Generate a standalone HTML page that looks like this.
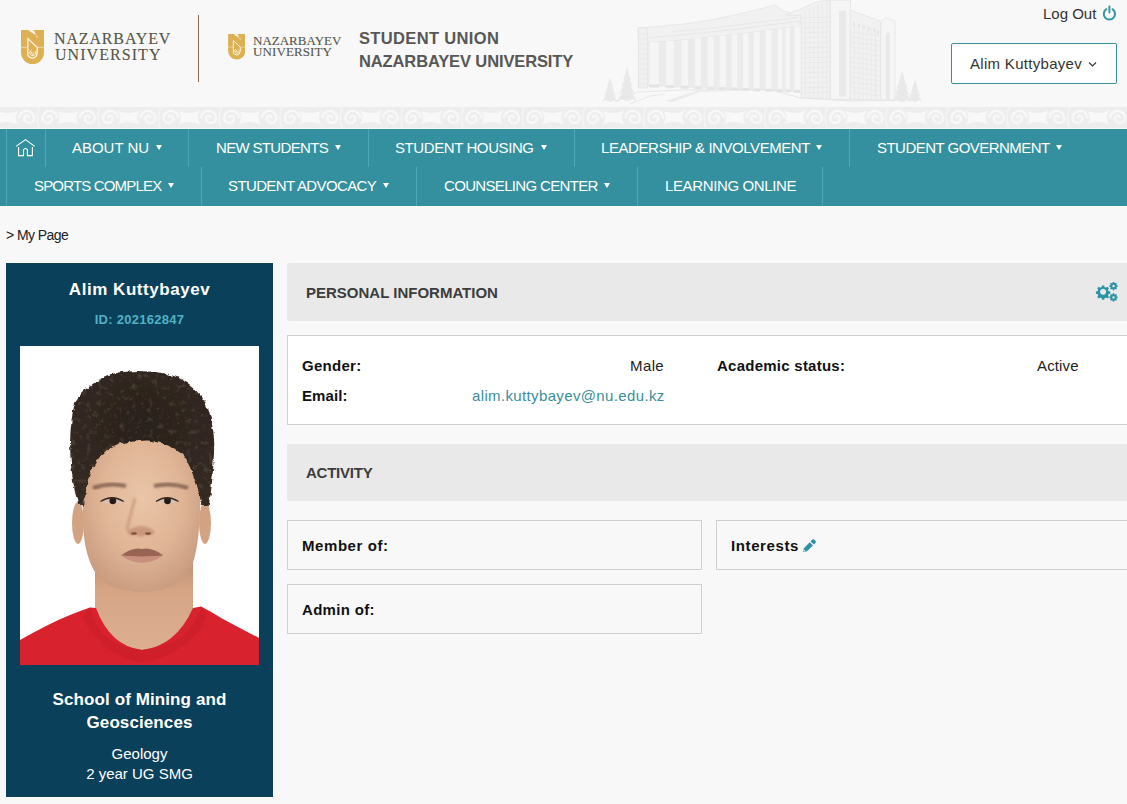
<!DOCTYPE html>
<html><head><meta charset="utf-8">
<style>
*{margin:0;padding:0;box-sizing:border-box}
html,body{width:1127px;height:804px;overflow:hidden;background:#f8f8f8;font-family:"Liberation Sans",sans-serif;position:relative}
.abs{position:absolute}
#nav{position:absolute;left:0;top:129px;width:1127px;height:77px;background:#34909e}
.sep{position:absolute;width:1px;background:#4aa9b6}
.ni{position:absolute;color:#fff;font-size:15px;line-height:17px;white-space:nowrap}
.arr{position:absolute;width:0;height:0;border-left:3px solid transparent;border-right:3px solid transparent;border-top:5px solid #fff}
#card{position:absolute;left:6px;top:263px;width:267px;height:534px;background:#0b405b;outline:1px solid #fff}
.hdr{position:absolute;border-radius:2px;background:#e9e9e9;font-weight:bold;color:#3c3c3c;font-size:15px}
.box{position:absolute;border:1px solid #cfcfcf}
.lbl{position:absolute;font-weight:bold;font-size:15px;line-height:17px;color:#111;white-space:nowrap}
.val{position:absolute;font-size:15px;line-height:17px;color:#222;white-space:nowrap}
.ser{position:absolute;font-family:"Liberation Serif",serif;color:#55554b;white-space:nowrap;-webkit-text-stroke:0.12px #55554b}
</style></head>
<body>
<!-- ornament strip -->
<svg class="abs" style="left:0;top:107px" width="1127" height="22">
  <defs>
    <pattern id="orn" x="-0.6" y="0" width="60.6" height="21" patternUnits="userSpaceOnUse">
      <rect width="60.6" height="21" fill="#ededed"/>
      <path d="M-3 3.5 Q8 8.5 19 3.5 Q14 10.5 19 17.5 Q8 12.5 -3 17.5 Q2 10.5 -3 3.5Z" fill="#f8f8f8"/>
      <path d="M57.6 3.5 Q68.6 8.5 79.6 3.5 Q74.6 10.5 79.6 17.5 Q68.6 12.5 57.6 17.5 Q62.6 10.5 57.6 3.5Z" fill="#f8f8f8"/>
      <path d="M29.70 11.20 A2.4 2.4 0 0 0 24.90 11.20 A4.9 4.9 0 0 0 34.70 11.20 A7.4 7.4 0 0 0 19.90 11.20 " fill="none" stroke="#f8f8f8" stroke-width="2.6"/>
      <path d="M48.00 11.20 A2.4 2.4 0 0 1 52.80 11.20 A4.9 4.9 0 0 1 43.00 11.20 A7.4 7.4 0 0 1 57.80 11.20 " fill="none" stroke="#f8f8f8" stroke-width="2.6"/>
      <path d="M39.9 0.5 Q36.5 10.5 39.5 20.5" fill="none" stroke="#f8f8f8" stroke-width="1.2"/>
    </pattern>
  </defs>
  <rect width="1127" height="21" fill="url(#orn)"/>
</svg>

<!-- building -->
<svg class="abs" style="left:590px;top:0" width="345" height="106" viewBox="0 0 345 106">
<polygon points="48,43.0 54,42.8 60,42.4 66,42.0 72,41.6 78,41.1 84,40.6 90,40.1 96,39.5 102,38.9 108,38.3 114,37.7 120,37.1 126,36.4 132,35.8 138,35.1 144,34.4 150,33.7 156,33.0 162,32.2 168,31.5 174,30.7 180,30.0 186,29.2 192,28.4 198,27.6 204,26.8 210,26.0 210,92.0 204,91.8 198,91.6 192,91.3 186,91.1 180,90.9 174,90.7 168,90.4 162,90.2 156,90.0 150,89.8 144,89.6 138,89.3 132,89.1 126,88.9 120,88.7 114,88.4 108,88.2 102,88.0 96,87.8 90,87.6 84,87.3 78,87.1 72,86.9 66,86.7 60,86.4 54,86.2 48,86.0" fill="#ebebeb"/>
<polygon points="48,28.0 81,25.0 87,24.6 93,24.0 99,23.3 105,22.4 111,21.5 117,20.5 123,19.4 129,18.2 135,17.0 141,15.7 147,14.4 153,13.0 159,11.6 165,10.2 171,8.7 177,7.1 183,5.5 185,5.3 194,11.3 211,15.6 210,26.0 204,26.8 198,27.6 192,28.4 186,29.2 180,30.0 174,30.7 168,31.5 162,32.2 156,33.0 150,33.7 144,34.4 138,35.1 132,35.8 126,36.4 120,37.1 114,37.7 108,38.3 102,38.9 96,39.5 90,40.1 84,40.6 78,41.1 72,41.6 66,42.0 60,42.4 54,42.8 48,43.0" fill="#f1f1f1" stroke="#e4e4e4" stroke-width="0.8"/>
<polyline points="48,38.0 54,37.8 60,37.4 66,37.0 72,36.6 78,36.1 84,35.6 90,35.1 96,34.5 102,33.9 108,33.3 114,32.7 120,32.1 126,31.4 132,30.8 138,30.1 144,29.4 150,28.7 156,28.0 162,27.2 168,26.5 174,25.7 180,25.0 186,24.2 192,23.4 198,22.6 204,21.8 210,21.0" fill="none" stroke="#e4e4e4" stroke-width="0.9"/>
<polyline points="82,31.8 88,31.2 94,30.7 100,30.1 106,29.5 112,28.9 118,28.3 124,27.6 130,27.0 136,26.3 142,25.6 148,24.9 154,24.2 160,23.5 166,22.7 172,22.0 178,21.2 184,20.5 190,19.7 196,18.9 202,18.1 208,17.3" fill="none" stroke="#e4e4e4" stroke-width="0.7"/>
<rect x="59.6" y="42.2" width="9.1" height="42.4" fill="#f5f5f5"/>
<rect x="59.1" y="84.6" width="10.1" height="3" fill="#e4e4e4"/>
<rect x="76.2" y="40.9" width="7.5" height="44.2" fill="#f5f5f5"/>
<rect x="75.7" y="85.2" width="8.5" height="3" fill="#e4e4e4"/>
<rect x="91.3" y="39.6" width="6.7" height="46.1" fill="#f5f5f5"/>
<rect x="90.8" y="85.7" width="7.7" height="3" fill="#e4e4e4"/>
<rect x="104.9" y="38.3" width="6.0" height="47.9" fill="#f5f5f5"/>
<rect x="104.4" y="86.2" width="7.0" height="3" fill="#e4e4e4"/>
<rect x="117.7" y="37.0" width="6.0" height="49.7" fill="#f5f5f5"/>
<rect x="117.2" y="86.7" width="7.0" height="3" fill="#e4e4e4"/>
<rect x="129.7" y="35.7" width="6.1" height="51.5" fill="#f5f5f5"/>
<rect x="129.2" y="87.1" width="7.1" height="3" fill="#e4e4e4"/>
<rect x="141.8" y="34.3" width="5.3" height="53.2" fill="#f5f5f5"/>
<rect x="141.3" y="87.6" width="6.3" height="3" fill="#e4e4e4"/>
<rect x="153.1" y="33.0" width="5.3" height="55.0" fill="#f5f5f5"/>
<rect x="152.6" y="88.0" width="6.3" height="3" fill="#e4e4e4"/>
<rect x="163.7" y="31.7" width="6.0" height="56.7" fill="#f5f5f5"/>
<rect x="163.2" y="88.4" width="7.0" height="3" fill="#e4e4e4"/>
<rect x="175.7" y="30.1" width="6.1" height="58.7" fill="#f5f5f5"/>
<rect x="175.2" y="88.8" width="7.1" height="3" fill="#e4e4e4"/>
<rect x="187.8" y="28.7" width="4.5" height="60.6" fill="#f5f5f5"/>
<rect x="187.3" y="89.3" width="5.5" height="3" fill="#e4e4e4"/>
<rect x="195.4" y="27.7" width="4.5" height="61.9" fill="#f5f5f5"/>
<rect x="194.9" y="89.5" width="5.5" height="3" fill="#e4e4e4"/>
<rect x="204.4" y="26.4" width="5.6" height="63.5" fill="#f5f5f5"/>
<rect x="203.9" y="89.9" width="6.6" height="3" fill="#e4e4e4"/>
<rect x="48.3" y="28" width="9" height="60" fill="#f0f0f0" stroke="#e4e4e4" stroke-width="0.8"/>
<line x1="48.3" y1="34" x2="57.3" y2="34" stroke="#e4e4e4" stroke-width="0.6"/>
<line x1="48.3" y1="39" x2="57.3" y2="39" stroke="#e4e4e4" stroke-width="0.6"/>
<line x1="48.3" y1="44" x2="57.3" y2="44" stroke="#e4e4e4" stroke-width="0.6"/>
<line x1="48.3" y1="49" x2="57.3" y2="49" stroke="#e4e4e4" stroke-width="0.6"/>
<line x1="48.3" y1="54" x2="57.3" y2="54" stroke="#e4e4e4" stroke-width="0.6"/>
<line x1="48.3" y1="59" x2="57.3" y2="59" stroke="#e4e4e4" stroke-width="0.6"/>
<line x1="48.3" y1="64" x2="57.3" y2="64" stroke="#e4e4e4" stroke-width="0.6"/>
<line x1="48.3" y1="69" x2="57.3" y2="69" stroke="#e4e4e4" stroke-width="0.6"/>
<line x1="48.3" y1="74" x2="57.3" y2="74" stroke="#e4e4e4" stroke-width="0.6"/>
<line x1="48.3" y1="79" x2="57.3" y2="79" stroke="#e4e4e4" stroke-width="0.6"/>
<line x1="48.3" y1="84" x2="57.3" y2="84" stroke="#e4e4e4" stroke-width="0.6"/>
<polygon points="195.6,15 228.3,1.4 240,0 240,99 211,98 211,15.6" fill="#f1f1f1" stroke="#e4e4e4" stroke-width="0.8"/>
<line x1="215.3" y1="11.9" x2="215.3" y2="98" stroke="#e4e4e4" stroke-width="0.6"/>
<line x1="219.6" y1="9.7" x2="219.6" y2="98" stroke="#e4e4e4" stroke-width="0.6"/>
<line x1="223.9" y1="7.6" x2="223.9" y2="98" stroke="#e4e4e4" stroke-width="0.6"/>
<line x1="228.2" y1="5.4" x2="228.2" y2="98" stroke="#e4e4e4" stroke-width="0.6"/>
<line x1="232.5" y1="3.2" x2="232.5" y2="98" stroke="#e4e4e4" stroke-width="0.6"/>
<line x1="236.8" y1="1.1" x2="236.8" y2="98" stroke="#e4e4e4" stroke-width="0.6"/>
<line x1="211" y1="18" x2="240" y2="17" stroke="#e4e4e4" stroke-width="0.6"/>
<line x1="211" y1="23" x2="240" y2="22" stroke="#e4e4e4" stroke-width="0.6"/>
<line x1="211" y1="28" x2="240" y2="27" stroke="#e4e4e4" stroke-width="0.6"/>
<line x1="211" y1="33" x2="240" y2="32" stroke="#e4e4e4" stroke-width="0.6"/>
<line x1="211" y1="38" x2="240" y2="37" stroke="#e4e4e4" stroke-width="0.6"/>
<line x1="211" y1="43" x2="240" y2="42" stroke="#e4e4e4" stroke-width="0.6"/>
<line x1="211" y1="48" x2="240" y2="47" stroke="#e4e4e4" stroke-width="0.6"/>
<line x1="211" y1="53" x2="240" y2="52" stroke="#e4e4e4" stroke-width="0.6"/>
<line x1="211" y1="58" x2="240" y2="57" stroke="#e4e4e4" stroke-width="0.6"/>
<line x1="211" y1="63" x2="240" y2="62" stroke="#e4e4e4" stroke-width="0.6"/>
<line x1="211" y1="68" x2="240" y2="67" stroke="#e4e4e4" stroke-width="0.6"/>
<line x1="211" y1="73" x2="240" y2="72" stroke="#e4e4e4" stroke-width="0.6"/>
<line x1="211" y1="78" x2="240" y2="77" stroke="#e4e4e4" stroke-width="0.6"/>
<line x1="211" y1="83" x2="240" y2="82" stroke="#e4e4e4" stroke-width="0.6"/>
<line x1="211" y1="88" x2="240" y2="87" stroke="#e4e4e4" stroke-width="0.6"/>
<line x1="211" y1="93" x2="240" y2="92" stroke="#e4e4e4" stroke-width="0.6"/>
<rect x="240.4" y="0" width="20" height="99.4" fill="#f5f5f5" stroke="#e4e4e4" stroke-width="0.9"/>
<rect x="249" y="10.6" width="7" height="86" fill="#e9e9e9"/>
<polygon points="260.3,10 290.8,21.3 290.8,100 260.3,99.4" fill="#f1f1f1" stroke="#e4e4e4" stroke-width="0.8"/>
<line x1="264.5" y1="21.6" x2="264.5" y2="99" stroke="#e4e4e4" stroke-width="0.6"/>
<line x1="268.7" y1="23.1" x2="268.7" y2="99" stroke="#e4e4e4" stroke-width="0.6"/>
<line x1="272.9" y1="24.7" x2="272.9" y2="99" stroke="#e4e4e4" stroke-width="0.6"/>
<line x1="277.1" y1="26.2" x2="277.1" y2="99" stroke="#e4e4e4" stroke-width="0.6"/>
<line x1="281.3" y1="27.8" x2="281.3" y2="99" stroke="#e4e4e4" stroke-width="0.6"/>
<line x1="285.5" y1="29.3" x2="285.5" y2="99" stroke="#e4e4e4" stroke-width="0.6"/>
<line x1="260.3" y1="32" x2="290.8" y2="36" stroke="#e4e4e4" stroke-width="0.6"/>
<line x1="260.3" y1="37" x2="290.8" y2="41" stroke="#e4e4e4" stroke-width="0.6"/>
<line x1="260.3" y1="42" x2="290.8" y2="46" stroke="#e4e4e4" stroke-width="0.6"/>
<line x1="260.3" y1="47" x2="290.8" y2="51" stroke="#e4e4e4" stroke-width="0.6"/>
<line x1="260.3" y1="52" x2="290.8" y2="56" stroke="#e4e4e4" stroke-width="0.6"/>
<line x1="260.3" y1="57" x2="290.8" y2="61" stroke="#e4e4e4" stroke-width="0.6"/>
<line x1="260.3" y1="62" x2="290.8" y2="66" stroke="#e4e4e4" stroke-width="0.6"/>
<line x1="260.3" y1="67" x2="290.8" y2="71" stroke="#e4e4e4" stroke-width="0.6"/>
<line x1="260.3" y1="72" x2="290.8" y2="76" stroke="#e4e4e4" stroke-width="0.6"/>
<line x1="260.3" y1="77" x2="290.8" y2="81" stroke="#e4e4e4" stroke-width="0.6"/>
<line x1="260.3" y1="82" x2="290.8" y2="86" stroke="#e4e4e4" stroke-width="0.6"/>
<line x1="260.3" y1="87" x2="290.8" y2="91" stroke="#e4e4e4" stroke-width="0.6"/>
<line x1="260.3" y1="92" x2="290.8" y2="96" stroke="#e4e4e4" stroke-width="0.6"/>
<rect x="263" y="22.0" width="2" height="4" fill="#e6e6e6"/>
<rect x="268" y="23.6" width="2" height="4" fill="#e6e6e6"/>
<rect x="273" y="25.2" width="2" height="4" fill="#e6e6e6"/>
<rect x="278" y="26.8" width="2" height="4" fill="#e6e6e6"/>
<rect x="283" y="28.4" width="2" height="4" fill="#e6e6e6"/>
<rect x="287" y="30.0" width="2" height="4" fill="#e6e6e6"/>
<polygon points="290.8,21.3 296,17.8 305,21 305,100 290.8,100" fill="#f5f5f5" stroke="#e4e4e4" stroke-width="0.8"/>
<rect x="295.8" y="32.7" width="4" height="66.7" fill="#e9e9e9"/>
<path d="M37 66.8 L39.0 73.6 L38.1 71.6 L41.0 80.5 L39.2 78.5 L43.0 87.3 L40.3 85.3 L45.0 94.2 L41.4 92.2 L47.0 101.0 L42.5 99.0 L37 101 L31.5 99.0 L27.0 101.0 L32.6 92.2 L29.0 94.2 L33.7 85.3 L31.0 87.3 L34.8 78.5 L33.0 80.5 L35.9 71.6 L35.0 73.6 Z" fill="#e9e9e9"/>
<path d="M20 77.6 L21.6 82.5 L20.9 80.5 L23.2 87.4 L21.8 85.4 L24.8 92.2 L22.6 90.2 L26.4 97.1 L23.5 95.1 L28.0 102.0 L24.4 100.0 L20 102 L15.6 100.0 L12.0 102.0 L16.5 95.1 L13.6 97.1 L17.4 90.2 L15.2 92.2 L18.2 85.4 L16.8 87.4 L19.1 80.5 L18.4 82.5 Z" fill="#e9e9e9"/>
<path d="M312 71 L314.0 77.2 L313.1 75.2 L316.0 83.4 L314.2 81.4 L318.0 89.6 L315.3 87.6 L320.0 95.8 L316.4 93.8 L322.0 102.0 L317.5 100.0 L312 102 L306.5 100.0 L302.0 102.0 L307.6 93.8 L304.0 95.8 L308.7 87.6 L306.0 89.6 L309.8 81.4 L308.0 83.4 L310.9 75.2 L310.0 77.2 Z" fill="#e9e9e9"/>
<path d="M325 79.5 L326.5 84.0 L325.8 82.0 L328.0 88.5 L326.6 86.5 L329.5 93.0 L327.5 91.0 L331.0 97.5 L328.3 95.5 L332.5 102.0 L329.1 100.0 L325 102 L320.9 100.0 L317.5 102.0 L321.7 95.5 L319.0 97.5 L322.5 91.0 L320.5 93.0 L323.4 86.5 L322.0 88.5 L324.2 82.0 L323.5 84.0 Z" fill="#e9e9e9"/>
<polygon points="75,101 108,90.5 170,90 110,92 82,102" fill="#ebebeb"/>
<polyline points="25,102 48,92 90,90 180,89.5 211,98 260,100.9 305,100.5" fill="none" stroke="#e4e4e4" stroke-width="0.9"/>
<polyline points="40,104 60,96 75,94" fill="none" stroke="#e4e4e4" stroke-width="0.8"/>
</svg>

<!-- logo 1 -->
<svg class="abs" style="left:21px;top:30px" width="23" height="34" viewBox="0 0 23 34">
  <path d="M0 0 H23 V22.5 A11.5 11.5 0 0 1 0 22.5 Z" fill="#ddb053"/>
  <path d="M0 17.3 H6.4 M16.7 17.3 H23" stroke="#f3e2bb" stroke-width="0.8"/>
  <path d="M7.2 0.2 L12.8 0.2 L16.4 8.6 L16.4 6 Z" fill="#fffdf6"/>
  <path d="M6.9 8.6 L16.2 17.4 V22.8 Q15.8 28 11.3 28 Q6.9 27.8 6.9 24 Z" fill="none" stroke="#fffaf0" stroke-width="1.2"/>
  <path d="M13.92 20.94 A2.9 2.9 0 1 1 10.71 20.07 M12.90 22.80 A1.2 1.2 0 1 1 11.50 21.70" fill="none" stroke="#fffaf0" stroke-width="0.9"/>
</svg>
<div class="ser" style="left:54px;top:30px;font-size:16px;line-height:18px;letter-spacing:0.85px">NAZARBAYEV</div>
<div class="ser" style="left:55px;top:46px;font-size:16px;line-height:18px;letter-spacing:1.05px">UNIVERSITY</div>
<div class="abs" style="left:198px;top:15px;width:1px;height:67px;background:#8d6c52"></div>

<!-- logo 2 -->
<svg class="abs" style="left:227.5px;top:34px" width="17.5" height="25.5" viewBox="0 0 23 34">
  <path d="M0 0 H23 V22.5 A11.5 11.5 0 0 1 0 22.5 Z" fill="#ddb053"/>
  <path d="M0 17.3 H6.4 M16.7 17.3 H23" stroke="#f3e2bb" stroke-width="0.8"/>
  <path d="M7.2 0.2 L12.8 0.2 L16.4 8.6 L16.4 6 Z" fill="#fffdf6"/>
  <path d="M6.9 8.6 L16.2 17.4 V22.8 Q15.8 28 11.3 28 Q6.9 27.8 6.9 24 Z" fill="none" stroke="#fffaf0" stroke-width="1.2"/>
  <path d="M13.92 20.94 A2.9 2.9 0 1 1 10.71 20.07 M12.90 22.80 A1.2 1.2 0 1 1 11.50 21.70" fill="none" stroke="#fffaf0" stroke-width="0.9"/>
</svg>
<div class="ser" style="left:253px;top:34px;font-size:13px;line-height:14px;letter-spacing:0px">NAZARBAYEV</div>
<div class="ser" style="left:253px;top:45px;font-size:13px;line-height:14px;letter-spacing:0.1px">UNIVERSITY</div>

<div class="abs" style="left:359px;top:29px;font-size:16.5px;line-height:19px;font-weight:bold;color:#575757;white-space:nowrap;letter-spacing:0.35px">STUDENT UNION</div>
<div class="abs" style="left:359px;top:52px;font-size:16.5px;line-height:19px;font-weight:bold;color:#575757;white-space:nowrap;letter-spacing:-0.12px">NAZARBAYEV UNIVERSITY</div>

<!-- logout -->
<div class="abs" style="left:1043px;top:5px;font-size:15px;line-height:17px;color:#333;white-space:nowrap">Log Out</div>
<svg class="abs" style="left:1102px;top:5px" width="15" height="16" viewBox="0 0 15 16">
  <path d="M4.3 4.2 A5.6 5.6 0 1 0 10.5 4.2" fill="none" stroke="#3a95a3" stroke-width="2" stroke-linecap="round"/>
  <path d="M7.4 1.4 V7.4" stroke="#3a95a3" stroke-width="2" stroke-linecap="round"/>
</svg>
<div class="abs" style="left:951px;top:43px;width:166px;height:41px;border:1px solid #3a8f9c;border-radius:2px;background:#fff"></div>
<div class="abs" style="left:970px;top:55px;font-size:15px;line-height:17px;color:#333;white-space:nowrap;letter-spacing:0.3px">Alim Kuttybayev</div>
<svg class="abs" style="left:1088px;top:61px" width="9" height="7" viewBox="0 0 9 7"><path d="M1 1.5 L4.5 5 L8 1.5" fill="none" stroke="#333" stroke-width="1.1"/></svg>

<!-- nav -->
<div id="nav">
  <div class="sep" style="left:6px;top:0;height:77px"></div>
  <div class="sep" style="left:45px;top:0;height:38px"></div>
  <div class="sep" style="left:188px;top:0;height:38px"></div>
  <div class="sep" style="left:368px;top:0;height:38px"></div>
  <div class="sep" style="left:574px;top:0;height:38px"></div>
  <div class="sep" style="left:849px;top:0;height:38px"></div>
  <div class="sep" style="left:201px;top:38px;height:39px"></div>
  <div class="sep" style="left:416px;top:38px;height:39px"></div>
  <div class="sep" style="left:637px;top:38px;height:39px"></div>
  <div class="sep" style="left:822px;top:38px;height:39px"></div>
  <svg class="abs" style="left:14px;top:8px" width="23" height="21" viewBox="0 0 23 21"><path d="M2 9.4 L11.5 2.6 L20.7 9.4 M4.6 10 V18.6 H9.5 V12.6 L11.5 11.4 L13.4 12.6 V18.6 H18.4 V10" fill="none" stroke="#fff" stroke-width="1.1"/></svg>
  <div class="ni" style="left:72px;top:10px;letter-spacing:-0.02px">ABOUT NU</div><div class="arr" style="left:156px;top:16px"></div>
  <div class="ni" style="left:216px;top:10px;letter-spacing:-0.66px">NEW STUDENTS</div><div class="arr" style="left:335px;top:16px"></div>
  <div class="ni" style="left:395px;top:10px;letter-spacing:-0.41px">STUDENT HOUSING</div><div class="arr" style="left:541px;top:16px"></div>
  <div class="ni" style="left:601px;top:10px;letter-spacing:-0.44px">LEADERSHIP &amp; INVOLVEMENT</div><div class="arr" style="left:816px;top:16px"></div>
  <div class="ni" style="left:877px;top:10px;letter-spacing:-0.53px">STUDENT GOVERNMENT</div><div class="arr" style="left:1056px;top:16px"></div>
  <div class="ni" style="left:34px;top:48px;letter-spacing:-0.83px">SPORTS COMPLEX</div><div class="arr" style="left:168px;top:54px"></div>
  <div class="ni" style="left:228px;top:48px;letter-spacing:-0.62px">STUDENT ADVOCACY</div><div class="arr" style="left:383px;top:54px"></div>
  <div class="ni" style="left:444px;top:48px;letter-spacing:-0.67px">COUNSELING CENTER</div><div class="arr" style="left:604px;top:54px"></div>
  <div class="ni" style="left:665px;top:48px;letter-spacing:-0.37px">LEARNING ONLINE</div>
</div>

<div class="abs" style="left:6px;top:227px;font-size:14px;line-height:16px;color:#222;white-space:nowrap;letter-spacing:-0.56px">&gt; My Page</div>

<!-- card -->
<div id="card">
  <div class="abs" style="left:0;width:267px;top:17px;text-align:center;color:#fff;font-weight:bold;font-size:17px;line-height:19px;letter-spacing:0.54px">Alim Kuttybayev</div>
  <div class="abs" style="left:0;width:267px;top:49px;text-align:center;color:#52b1c3;font-weight:bold;font-size:13px;line-height:15px;letter-spacing:0.28px">ID: 202162847</div>
  <svg class="abs" style="left:14px;top:83px" width="239" height="319" viewBox="0 0 239 319">
    <defs>
      <radialGradient id="skin" cx="0.5" cy="0.42" r="0.62">
        <stop offset="0" stop-color="#eac5a8"/><stop offset="0.55" stop-color="#e0b596"/><stop offset="1" stop-color="#c89a7e"/>
      </radialGradient>
      <linearGradient id="neck" x1="0" y1="0" x2="0" y2="1">
        <stop offset="0" stop-color="#b98a6c"/><stop offset="0.35" stop-color="#d5a586"/><stop offset="1" stop-color="#deb193"/>
      </linearGradient>
      <filter id="soft" x="-50%" y="-50%" width="200%" height="200%"><feGaussianBlur stdDeviation="1.1"/></filter>
      <filter id="hairtex" x="-10%" y="-10%" width="120%" height="120%">
        <feTurbulence type="fractalNoise" baseFrequency="0.18" numOctaves="3" seed="7" result="n"/>
        <feDisplacementMap in="SourceGraphic" in2="n" scale="4" xChannelSelector="R" yChannelSelector="G" result="d"/>
        <feColorMatrix in="n" type="matrix" values="0 0 0 0 0.24  0 0 0 0 0.19  0 0 0 0 0.15  0 0 0 0.5 -0.26" result="c"/>
        <feComposite in="c" in2="d" operator="in" result="t"/>
        <feMerge><feMergeNode in="d"/><feMergeNode in="t"/></feMerge>
      </filter>
      <radialGradient id="hairg" cx="0.5" cy="0.4" r="0.6">
        <stop offset="0" stop-color="#2a211b"/><stop offset="1" stop-color="#342a23"/>
      </radialGradient>
    </defs>
    <rect width="239" height="319" fill="#fff"/>
    <path d="M75 205 L75 319 L173 319 L173 205 Z" fill="url(#neck)"/>
    <path d="M0 294 Q14 286 28 279 Q40 273 50 269 Q60 265 70 261.5 L76 262 Q90 300 122 304 Q156 300 173 262 L181 260.5 Q192 266 202 272.4 Q220 282 239 292 V319 H0 Z" fill="#d8222e"/>
    <path d="M63 270 Q66 280 72 285.5 Q80 296 91.4 305 Q105 314 122 316 Q138 314 152 307 Q166 298 178.5 285.5 Q184 278 187 268 L181 260.5 Q170 300 122 304 Q78 300 70 261.5 Z" fill="#cf1f2a"/>
    <ellipse cx="58" cy="177" rx="6" ry="21" fill="#d3a283"/>
    <ellipse cx="185" cy="177" rx="6" ry="21" fill="#d3a283"/>
    <path d="M66 110 Q62 140 63 166 Q63 185 65 198 Q68 214 74 224.5 Q82 235 91.4 240 Q106 246 122 246 Q138 246 152 240 Q163 233 172 220 Q177 205 178.5 187.5 Q181 165 180 140 Q178 110 172 95 Q150 84 121 84 Q90 84 70 95 Z" fill="url(#skin)"/>
    <path d="M64 160 L58 158 Q50 130 50 95 Q51 70 55 57 Q62 45 70 40 Q82 30 97.6 26.5 Q122 23 146 27.6 Q168 33 180 48.8 Q190 62 192 78.5 Q195 92 194 106 Q193 135 188.8 160 L181 160 Q180 145 174 131.5 Q170 120 165.4 112.4 Q158 103 148.5 99.7 Q138 95 127 94.4 Q112 95 99.7 97.6 Q90 101 84.8 106 Q75 115 70 127 Q66 140 64 160 Z" fill="url(#hairg)" filter="url(#hairtex)"/>
    <path d="M73 142 Q90 136 106 140" stroke="#7a5a48" stroke-width="4" fill="none" opacity="0.8" filter="url(#soft)"/>
    <path d="M134 140 Q150 136 168 142" stroke="#7a5a48" stroke-width="4" fill="none" opacity="0.8" filter="url(#soft)"/>
    <path d="M80.5 155.5 Q92 148 103.8 155.5 Q92 160 80.5 155.5 Z" fill="#d9c2b4"/>
    <circle cx="92.8" cy="154.8" r="3.4" fill="#251a15"/>
    <path d="M80.5 155.5 Q92 148 103.8 155.5" stroke="#3a2820" stroke-width="1.3" fill="none"/>
    <path d="M136 155.5 Q147 148 158.5 155.5 Q147 160 136 155.5 Z" fill="#d9c2b4"/>
    <circle cx="147.5" cy="154.8" r="3.4" fill="#251a15"/>
    <path d="M136 155.5 Q147 148 158.5 155.5" stroke="#3a2820" stroke-width="1.3" fill="none"/>
    <path d="M115 152 Q110 170 107 184" stroke="#c08f70" stroke-width="3" fill="none" opacity="0.6" filter="url(#soft)"/>
    <path d="M106.5 186 Q110 191 116 189 Q121 192 126 189 Q132 191 135 186 Q131 181 121 180 Q111 181 106.5 186 Z" fill="#c48f72" opacity="0.8" filter="url(#soft)"/>
    <ellipse cx="114" cy="187.5" rx="3" ry="1.3" fill="#7d4f3e"/>
    <ellipse cx="128" cy="187.5" rx="3" ry="1.3" fill="#7d4f3e"/>
    <path d="M101 209.5 Q112 201 122 203 Q132 201 143.4 209.5 Q122 212 101 209.5 Z" fill="#9a6454"/>
    <path d="M101 209.5 Q122 224 143.4 209.5 Q122 212 101 209.5 Z" fill="#c88f7e"/>
  </svg>
  <div class="abs" style="left:0;width:267px;top:425px;text-align:center;color:#fff;font-weight:bold;font-size:17px;line-height:23px;letter-spacing:0.1px">School of Mining and<br>Geosciences</div>
  <div class="abs" style="left:0;width:267px;top:481px;text-align:center;color:#fff;font-size:15px;line-height:20px">Geology<br>2 year UG SMG</div>
</div>

<!-- right content -->
<div class="hdr" style="left:287px;top:263px;width:860px;height:58px"><span class="abs" style="left:19px;top:21px;white-space:nowrap">PERSONAL INFORMATION</span></div>
<svg class="abs" style="left:1095px;top:280px" width="25" height="25" viewBox="0 0 25 25" id="gear">
  <g fill="#2a93a5" transform="translate(8.1 11.8) scale(0.9) translate(-8.1 -11.8)">
    <path d="M6.9 4.7 h2.4 l0.4 1.8 l1.6 0.7 l1.6 -1 l1.7 1.7 l-1 1.6 l0.7 1.6 l1.8 0.4 v2.4 l-1.8 0.4 l-0.7 1.6 l1 1.6 l-1.7 1.7 l-1.6 -1 l-1.6 0.7 l-0.4 1.8 h-2.4 l-0.4 -1.8 l-1.6 -0.7 l-1.6 1 l-1.7 -1.7 l1 -1.6 l-0.7 -1.6 l-1.8 -0.4 v-2.4 l1.8 -0.4 l0.7 -1.6 l-1 -1.6 l1.7 -1.7 l1.6 1 l1.6 -0.7 Z M8.1 8.4 a3.4 3.4 0 1 0 0.01 0 Z" fill-rule="evenodd"/>
  </g>
  <g fill="#2a93a5" fill-rule="evenodd"><g transform="translate(18.5 6.1) scale(0.88) translate(-18.5 -6.1)">
    <path d="M17.7 1.3 h1.6 l0.2 1.1 l0.9 0.4 l0.9 -0.6 l1.1 1.1 l-0.6 0.9 l0.4 0.9 l1.1 0.2 v1.6 l-1.1 0.2 l-0.4 0.9 l0.6 0.9 l-1.1 1.1 l-0.9 -0.6 l-0.9 0.4 l-0.2 1.1 h-1.6 l-0.2 -1.1 l-0.9 -0.4 l-0.9 0.6 l-1.1 -1.1 l0.6 -0.9 l-0.4 -0.9 l-1.1 -0.2 v-1.6 l1.1 -0.2 l0.4 -0.9 l-0.6 -0.9 l1.1 -1.1 l0.9 0.6 l0.9 -0.4 Z M18.5 4.7 a1.4 1.4 0 1 0 0.01 0 Z"/></g><g transform="translate(18.5 17.4) scale(0.88) translate(-18.5 -17.4)">
    <path d="M17.7 12.6 h1.6 l0.2 1.1 l0.9 0.4 l0.9 -0.6 l1.1 1.1 l-0.6 0.9 l0.4 0.9 l1.1 0.2 v1.6 l-1.1 0.2 l-0.4 0.9 l0.6 0.9 l-1.1 1.1 l-0.9 -0.6 l-0.9 0.4 l-0.2 1.1 h-1.6 l-0.2 -1.1 l-0.9 -0.4 l-0.9 0.6 l-1.1 -1.1 l0.6 -0.9 l-0.4 -0.9 l-1.1 -0.2 v-1.6 l1.1 -0.2 l0.4 -0.9 l-0.6 -0.9 l1.1 -1.1 l0.9 0.6 l0.9 -0.4 Z M18.5 16 a1.4 1.4 0 1 0 0.01 0 Z"/>
  </g></g>
</svg>
<div class="box" style="left:287px;top:335px;width:860px;height:90px;background:#fff"></div>
<div class="lbl" style="left:302px;top:357px;letter-spacing:0.28px">Gender:</div>
<div class="val" style="left:630px;top:357px;letter-spacing:0.4px">Male</div>
<div class="lbl" style="left:717px;top:357px;letter-spacing:0.25px">Academic status:</div>
<div class="val" style="left:1037px;top:357px;letter-spacing:0.14px">Active</div>
<div class="lbl" style="left:302px;top:387px;letter-spacing:0.1px">Email:</div>
<div class="val" style="left:472px;top:387px;color:#3a8f9c;letter-spacing:0.36px">alim.kuttybayev@nu.edu.kz</div>

<div class="hdr" style="left:287px;top:444px;width:860px;height:57px"><span class="abs" style="left:19px;top:20px;letter-spacing:-0.24px">ACTIVITY</span></div>
<div class="box" style="left:287px;top:520px;width:415px;height:50px"></div>
<div class="lbl" style="left:302px;top:537px;letter-spacing:0.57px">Member of:</div>
<div class="box" style="left:716px;top:520px;width:431px;height:50px"></div>
<div class="lbl" style="left:731px;top:537px;letter-spacing:0.6px">Interests</div>
<svg class="abs" style="left:800px;top:538px" width="18" height="18" viewBox="0 0 18 18"><path d="M3.2 14 L3.86 10.14 L9.73 4.27 L12.93 7.47 L7.06 13.34 Z" fill="#2a93a5"/><path d="M10.6 3.4 L12.4 1.6 Q13.4 0.8 14.4 1.8 L15.4 2.8 Q16.4 3.8 15.6 4.8 L13.8 6.6 Z" fill="#2a93a5"/><path d="M4.0 11.6 L5.6 13.1 L3.5 13.6 Z" fill="#e8f3f5"/></svg>
<div class="box" style="left:287px;top:584px;width:415px;height:50px"></div>
<div class="lbl" style="left:302px;top:601px;letter-spacing:0.31px">Admin of:</div>

</body></html>
